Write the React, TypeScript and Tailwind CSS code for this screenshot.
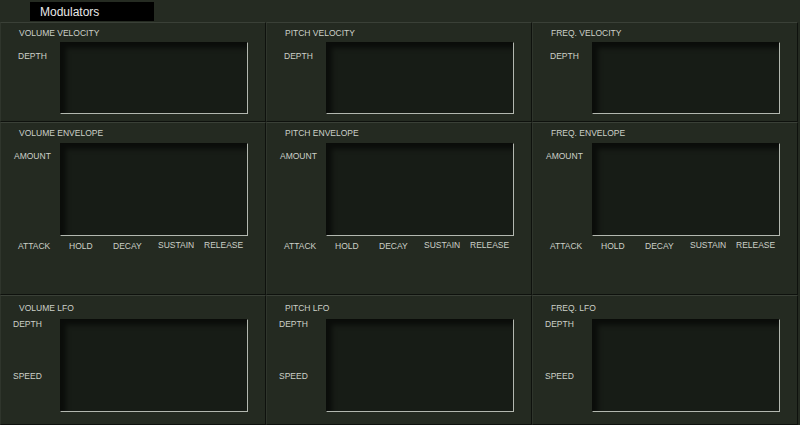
import React from "react";

const font = { fontFamily: '"Liberation Sans", Arial, sans-serif' };

function Box({ h }: { h: string }) {
  return (
    <div
      className={`w-[188px] ${h} shrink-0 bg-[#171c16] border-t border-l border-t-[#0a0c09] border-l-[#0a0c09] border-r border-b border-r-[#b3b8b0] border-b-[#b3b8b0] shadow-[inset_5px_5px_5px_rgba(0,0,0,0.55)]`}
    />
  );
}

const label = "text-[8.5px] leading-[10px] text-[#cdd1c9] whitespace-nowrap";

function VelocityPanel({ title }: { title: string }) {
  return (
    <div className="w-[266px] h-[100px] flex flex-col border-t border-l border-t-[#3a4037] border-l-[#2f352c] border-b border-r border-b-[#0e110d] border-r-[#0e110d]">
      <div className={`${label} ml-[18px] mt-[5px]`}>{title}</div>
      <div className="flex mt-[4px]">
        <div className="w-[59px] pl-[17px] pt-[9px]">
          <div className={label}>DEPTH</div>
        </div>
        <Box h="h-[72px]" />
      </div>
    </div>
  );
}

function EnvelopePanel({ title }: { title: string }) {
  return (
    <div className="w-[266px] h-[173px] flex flex-col border-t border-l border-t-[#3a4037] border-l-[#2f352c] border-b border-r border-b-[#0e110d] border-r-[#0e110d]">
      <div className={`${label} ml-[18px] mt-[5px]`}>{title}</div>
      <div className="flex mt-[5px]">
        <div className="w-[59px] pl-[13px] pt-[8px]">
          <div className={label}>AMOUNT</div>
        </div>
        <Box h="h-[93px]" />
      </div>
      <div className="flex pl-[17px] mt-[4px] items-start">
        <div className={`${label} w-[51px] mt-[1px]`}>ATTACK</div>
        <div className={`${label} w-[44px] mt-[1px]`}>HOLD</div>
        <div className={`${label} w-[45px] mt-[1px]`}>DECAY</div>
        <div className={`${label} w-[46px]`}>SUSTAIN</div>
        <div className={label}>RELEASE</div>
      </div>
    </div>
  );
}

function LfoPanel({ title }: { title: string }) {
  return (
    <div className="w-[266px] h-[130px] flex flex-col border-t border-l border-t-[#3a4037] border-l-[#2f352c] border-b border-r border-b-[#0e110d] border-r-[#0e110d]">
      <div className={`${label} ml-[18px] mt-[7px]`}>{title}</div>
      <div className="flex mt-[6px]">
        <div className="w-[59px] pl-[12px] flex flex-col">
          <div className={label}>DEPTH</div>
          <div className={`${label} mt-[42px]`}>SPEED</div>
        </div>
        <Box h="h-[93px]" />
      </div>
    </div>
  );
}

export default function App() {
  return (
    <div style={font} className="w-[800px] h-[425px] bg-[#242a21] flex flex-col overflow-hidden">
      <div className="h-[22px] flex items-start bg-[#252b22]">
        <div className="ml-[30px] mt-[2px] w-[124px] h-[19px] bg-black flex items-center pl-[10px]">
          <span className="text-[12px] leading-[14px] text-[#e8e8e8]">Modulators</span>
        </div>
      </div>
      <div className="flex">
        <VelocityPanel title="VOLUME VELOCITY" />
        <VelocityPanel title="PITCH VELOCITY" />
        <VelocityPanel title="FREQ. VELOCITY" />
      </div>
      <div className="flex">
        <EnvelopePanel title="VOLUME ENVELOPE" />
        <EnvelopePanel title="PITCH ENVELOPE" />
        <EnvelopePanel title="FREQ. ENVELOPE" />
      </div>
      <div className="flex">
        <LfoPanel title="VOLUME LFO" />
        <LfoPanel title="PITCH LFO" />
        <LfoPanel title="FREQ. LFO" />
      </div>
    </div>
  );
}
